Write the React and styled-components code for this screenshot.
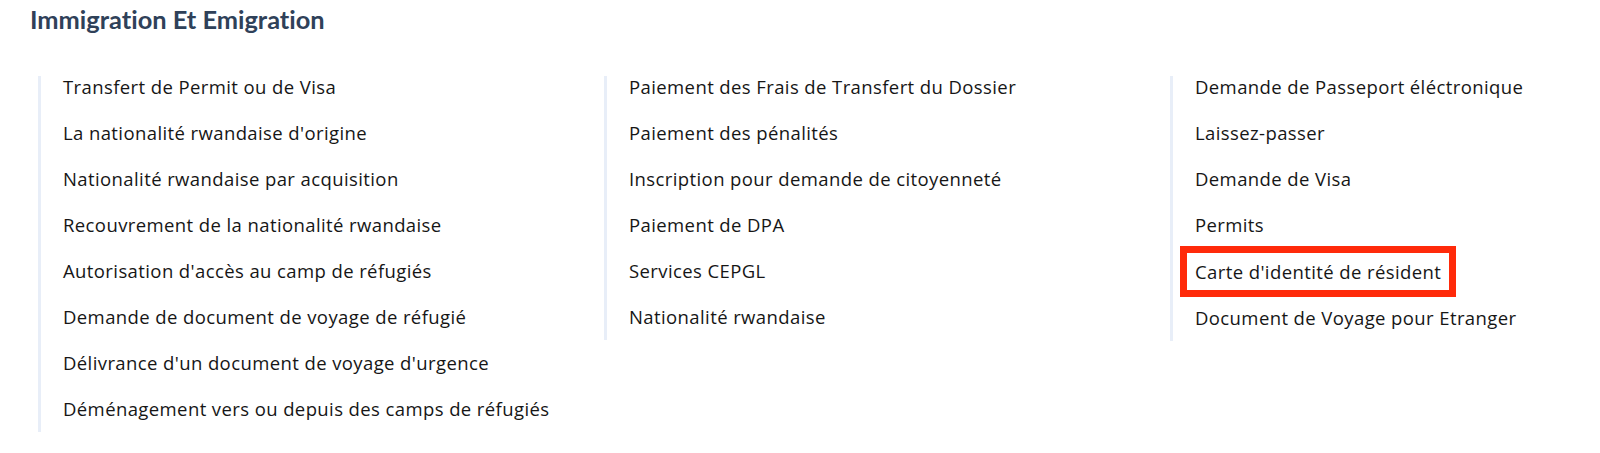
import React from 'react';
import styled, { createGlobalStyle } from 'styled-components';

const GlobalStyle = createGlobalStyle`
  body {
    margin: 0;
    background: #ffffff;
    font-family: "Nunito Sans", "Open Sans", Lato, sans-serif;
    font-variant-ligatures: none;
  }
`;

const Section = styled.section`
  width: 1600px;
  height: 453px;
  box-sizing: border-box;
  padding: 5px 0 0 30px;
  overflow: hidden;
`;

const Title = styled.h2`
  margin: 0;
  font-family: Lato, "Open Sans", sans-serif;
  font-size: 25.4px;
  line-height: 29px;
  font-weight: 700;
  color: #2f4159;
`;

const Columns = styled.div`
  display: grid;
  grid-template-columns: 566px 566px 1fr;
  align-items: start;
  margin: 42px 0 0 8px;
`;

const List = styled.ul`
  list-style: none;
  margin: 0;
  padding: 0 0 12px 22px;
  border-left: 3px solid #e8eef8;
  display: flex;
  flex-direction: column;
  gap: 24px;
`;

const Item = styled.li`
  font-family: "Open Sans", Lato, sans-serif;
  font-size: 18.5px;
  letter-spacing: 0.4px;
  line-height: 22px;
  color: #161616;
  white-space: nowrap;
`;

const Marked = styled.span`
  display: inline-block;
  outline: 7px solid #ff2a0a;
  outline-offset: 7px;
  margin-left: -1px;
  padding: 1px 1px 0;
`;

const columns = [
  [
    'Transfert de Permit ou de Visa',
    "La nationalité rwandaise d'origine",
    'Nationalité rwandaise par acquisition',
    'Recouvrement de la nationalité rwandaise',
    "Autorisation d'accès au camp de réfugiés",
    'Demande de document de voyage de réfugié',
    "Délivrance d'un document de voyage d'urgence",
    'Déménagement vers ou depuis des camps de réfugiés',
  ],
  [
    'Paiement des Frais de Transfert du Dossier',
    'Paiement des pénalités',
    'Inscription pour demande de citoyenneté',
    'Paiement de DPA',
    'Services CEPGL',
    'Nationalité rwandaise',
  ],
  [
    'Demande de Passeport éléctronique',
    'Laissez-passer',
    'Demande de Visa',
    'Permits',
    "Carte d'identité de résident",
    'Document de Voyage pour Etranger',
  ],
];

const highlighted = "Carte d'identité de résident";

const App = () => {
  return (
    <>
      <GlobalStyle />
      <Section>
        <Title>Immigration Et Emigration</Title>
        <Columns>
          {columns.map((items, i) => (
            <List key={i}>
              {items.map((label) => (
                <Item key={label}>
                  {label === highlighted ? <Marked>{label}</Marked> : label}
                </Item>
              ))}
            </List>
          ))}
        </Columns>
      </Section>
    </>
  );
};

export default App;
